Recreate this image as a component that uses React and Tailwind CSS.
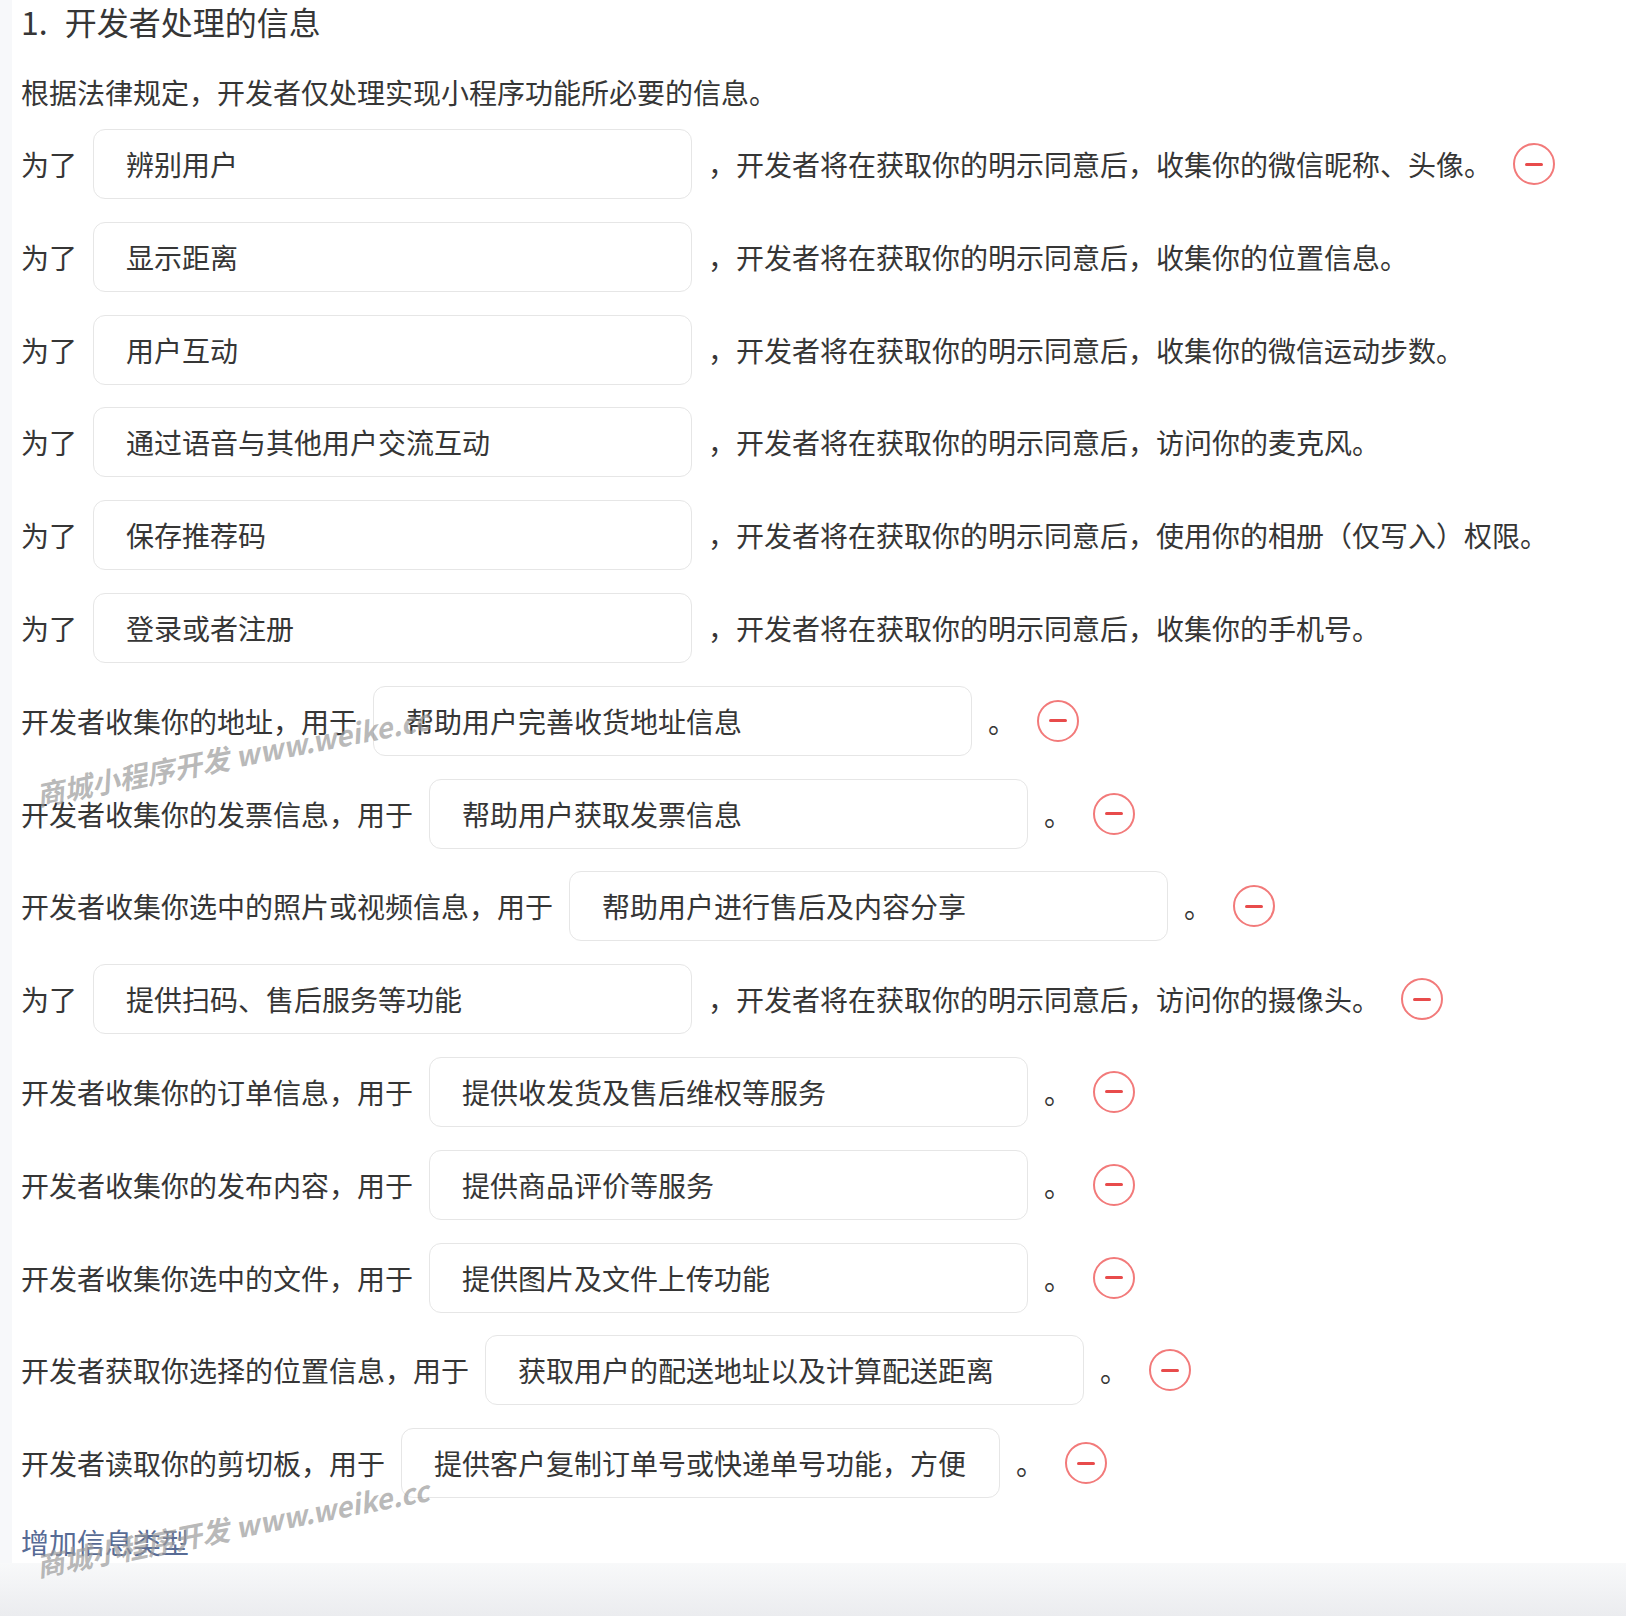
const rows = [
  { label: '为了', value: '辨别用户', suffix: '，开发者将在获取你的明示同意后，收集你的微信昵称、头像。', removable: true },
  { label: '为了', value: '显示距离', suffix: '，开发者将在获取你的明示同意后，收集你的位置信息。' },
  { label: '为了', value: '用户互动', suffix: '，开发者将在获取你的明示同意后，收集你的微信运动步数。' },
  { label: '为了', value: '通过语音与其他用户交流互动', suffix: '，开发者将在获取你的明示同意后，访问你的麦克风。' },
  { label: '为了', value: '保存推荐码', suffix: '，开发者将在获取你的明示同意后，使用你的相册（仅写入）权限。' },
  { label: '为了', value: '登录或者注册', suffix: '，开发者将在获取你的明示同意后，收集你的手机号。' },
  { label: '开发者收集你的地址，用于', value: '帮助用户完善收货地址信息', suffix: '。', removable: true },
  { label: '开发者收集你的发票信息，用于', value: '帮助用户获取发票信息', suffix: '。', removable: true },
  { label: '开发者收集你选中的照片或视频信息，用于', value: '帮助用户进行售后及内容分享', suffix: '。', removable: true },
  { label: '为了', value: '提供扫码、售后服务等功能', suffix: '，开发者将在获取你的明示同意后，访问你的摄像头。', removable: true },
  { label: '开发者收集你的订单信息，用于', value: '提供收发货及售后维权等服务', suffix: '。', removable: true },
  { label: '开发者收集你的发布内容，用于', value: '提供商品评价等服务', suffix: '。', removable: true },
  { label: '开发者收集你选中的文件，用于', value: '提供图片及文件上传功能', suffix: '。', removable: true },
  { label: '开发者获取你选择的位置信息，用于', value: '获取用户的配送地址以及计算配送距离', suffix: '。', removable: true },
  { label: '开发者读取你的剪切板，用于', value: '提供客户复制订单号或快递单号功能，方便', suffix: '。', removable: true },
];

function RemoveButton() {
  return (
    <button className="ml-[21px] w-[42px] h-[42px] shrink-0 rounded-full border-2 border-[#f27a7a] flex items-center justify-center">
      <span className="block w-[18px] h-[3px] rounded-full bg-[#e84b4b]" />
    </button>
  );
}

// faint diagonal watermark laid over the form
function Watermark({ top }) {
  return (
    <div
      className={`absolute left-[27px] ${top} origin-bottom-left -rotate-[11deg] whitespace-nowrap text-[28px] font-bold italic leading-none text-[#9a9a9a]/70 pointer-events-none`}
    >
      商城小程序开发 www.weike.cc
    </div>
  );
}

export default function App() {
  return (
    <div className="min-h-[1616px] bg-[#f7f8fa] font-['Noto_Sans_CJK_SC','Liberation_Sans',sans-serif] text-[#363636]">
      <div className="relative ml-[12px] bg-white pl-[9px] h-[1563px]">
        <div className="h-[42px] flex items-center text-[32px] leading-none">
          <span>1.</span>
          <span className="ml-[17px]">开发者处理的信息</span>
        </div>
        <div className="mt-[25px] h-[50px] flex items-center text-[28px] leading-none">
          根据法律规定，开发者仅处理实现小程序功能所必要的信息。
        </div>

        <div className="mt-[12px] flex flex-col gap-[22.8px]">
          {rows.map((r, i) => (
            <div key={i} className="flex items-center h-[70px] text-[28px] leading-none whitespace-nowrap">
              <span>{r.label}</span>
              <div className="ml-[16px] w-[599px] h-[70px] shrink-0 rounded-[12px] border-[1.5px] border-[#e6e6e6] pl-[32px] pr-[30px] flex items-center overflow-hidden">
                {r.value}
              </div>
              <span className="ml-[16px]">{r.suffix}</span>
              {r.removable && <RemoveButton />}
            </div>
          ))}
        </div>

        <div className="mt-[24px] h-[40px] flex items-center text-[28px] leading-none text-[#576b95]">增加信息类型</div>

        <Watermark top="top-[780px]" />
        <Watermark top="top-[1551px]" />
      </div>
      <div className="h-[53px] bg-gradient-to-b from-[#f8f9fa] to-[#ebecef]" />
    </div>
  );
}
